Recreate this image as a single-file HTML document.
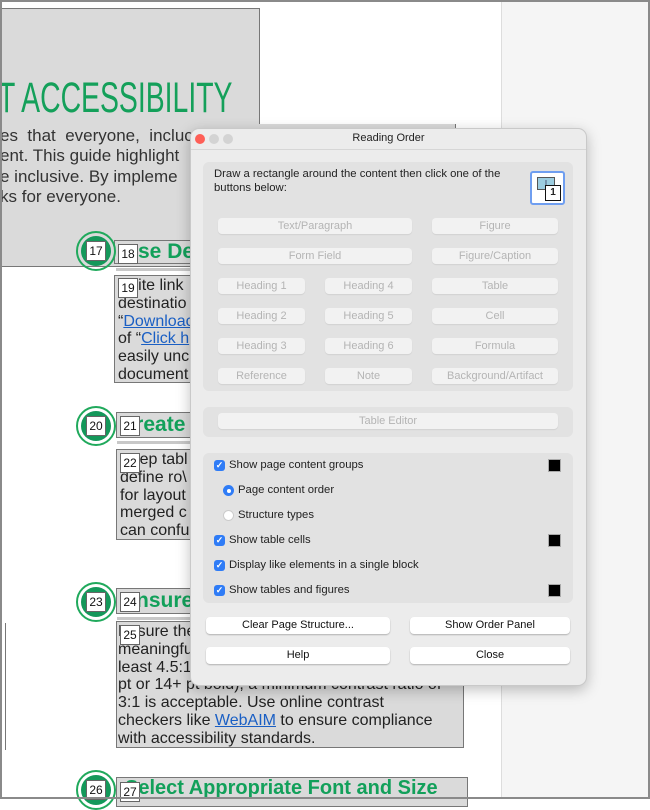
<!DOCTYPE html>
<html><head><meta charset="utf-8"><style>
*{margin:0;padding:0;box-sizing:border-box}
body{width:650px;height:799px;overflow:hidden;background:#fff;position:relative;font-family:"Liberation Sans",sans-serif}
.a{position:absolute}
.frame{left:0;top:0;width:650px;height:799px;border:2px solid #8a8a8a;z-index:50;pointer-events:none}
.gbox{position:absolute;background:#dadada;border:1px solid #777}
.num{position:absolute;width:20px;height:20px;background:#fff;border:1px solid #666;font-size:12px;text-align:center;line-height:18px;color:#111;z-index:3}
.circ{position:absolute;width:40px;height:40px;border-radius:50%;border:2px solid #20a95c;z-index:2}
.circ::after{content:"";position:absolute;left:3px;top:3px;width:30px;height:30px;border-radius:50%;background:#14985a}
.hd{position:absolute;color:#12a05a;font-weight:bold;font-size:21px;white-space:nowrap;overflow:hidden}
.bt{position:absolute;font-size:16px;line-height:17.8px;color:#222;white-space:nowrap;overflow:hidden;padding-left:3px}
.ln{position:absolute;height:3px;background:#c8c8c8}
a{color:#1a5fc4}
.dlg{left:190px;top:128px;width:397px;height:558px;background:#ececec;border-radius:9px;border:1px solid #c9c9c9;box-shadow:0 4px 14px rgba(0,0,0,.25);z-index:10;font-size:11.5px;color:#222}
.pan{position:absolute;background:#e2e2e2;border-radius:6px}
.b{position:absolute;height:16px;background:#f2f2f2;border-radius:4px;color:#b4b4b4;text-align:center;line-height:16px;font-size:11px;box-shadow:0 1px 1px rgba(0,0,0,.08)}
.wb{position:absolute;height:17px;background:#fff;border-radius:4px;text-align:center;line-height:17px;font-size:11px;color:#111;box-shadow:0 1px 1.5px rgba(0,0,0,.25)}
.cb{position:absolute;width:11px;height:11px;background:#2f7cf6;border-radius:3px;color:#fff;font-size:9px;line-height:11px;text-align:center;font-weight:bold}
.lb{position:absolute;font-size:11.3px;color:#222;white-space:nowrap}
.sq{position:absolute;width:13px;height:13px;background:#000;border:1px solid #aaa}
</style></head><body>
<div class="a frame"></div>
<div class="a" style="left:501px;top:0;width:149px;height:799px;background:#f5f5f5;border-left:1px solid #ddd"></div>

<!-- header -->
<div class="gbox" style="left:0;top:8px;width:260px;height:117px"></div>
<div class="a" style="left:-2px;top:74px;font-family:'Liberation Sans Narrow','Liberation Sans',sans-serif;font-size:43px;color:#14a05a;white-space:nowrap;transform:scaleX(.66);transform-origin:left">T ACCESSIBILITY</div>
<div class="gbox" style="left:0;top:124px;width:456px;height:143px;border-top:none"></div>
<div class="a" style="left:0;top:126px;font-size:17px;line-height:20.3px;color:#333;white-space:nowrap">
<div>es&nbsp; that&nbsp; everyone,&nbsp; incluc</div><div>ent. This guide highlight</div><div>e inclusive. By impleme</div><div>ks for everyone.</div></div>

<!-- section 1 -->
<div class="circ" style="left:76px;top:231px"></div>
<div class="num" style="left:86px;top:241px">17</div>
<div class="gbox" style="left:114px;top:240px;width:100px;height:24px"></div>
<div class="hd" style="left:138px;top:240px">se De</div>
<div class="num" style="left:118px;top:244px">18</div>
<div class="ln" style="left:116px;top:268px;width:90px"></div>
<div class="gbox" style="left:114px;top:275px;width:100px;height:108px"></div>
<div class="bt" style="left:115px;top:277px">Write link<br>destinatio<br>“<a href="#">Downloac</a><br>of “<a href="#">Click h</a><br>easily unc<br>document</div>
<div class="num" style="left:118px;top:278px">19</div>

<!-- section 2 -->
<div class="circ" style="left:76px;top:406px"></div>
<div class="num" style="left:86px;top:416px">20</div>
<div class="gbox" style="left:116px;top:412px;width:100px;height:26px"></div>
<div class="hd" style="left:120px;top:413px">Create</div>
<div class="num" style="left:120px;top:416px">21</div>
<div class="ln" style="left:117px;top:441px;width:90px"></div>
<div class="gbox" style="left:116px;top:449px;width:100px;height:91px"></div>
<div class="bt" style="left:117px;top:451px;width:95px">Keep tabl<br>define ro\<br>for layout<br>merged c<br>can confu</div>
<div class="num" style="left:120px;top:453px">22</div>

<!-- section 3 -->
<div class="a" style="left:3px;top:623px;width:3px;height:127px;border-right:1px solid #777"></div>
<div class="circ" style="left:76px;top:582px"></div>
<div class="num" style="left:86px;top:592px">23</div>
<div class="gbox" style="left:116px;top:588px;width:100px;height:26px"></div>
<div class="hd" style="left:122px;top:589px">Ensure</div>
<div class="num" style="left:120px;top:592px">24</div>
<div class="ln" style="left:117px;top:617px;width:90px"></div>
<div class="gbox" style="left:116px;top:621px;width:348px;height:127px"></div>
<div class="bt" style="left:115px;top:623px">Ensure the text and background colors have<br>meaningful contrast. Text should have at<br>least 4.5:1 contrast. For larger text (18+<br>pt or 14+ pt bold), a minimum contrast ratio of<br>3:1 is acceptable. Use online contrast<br>checkers like <a href="#">WebAIM</a> to ensure compliance<br>with accessibility standards.</div>
<div class="num" style="left:120px;top:625px">25</div>

<!-- section 4 -->
<div class="circ" style="left:76px;top:770px"></div>
<div class="num" style="left:86px;top:780px">26</div>
<div class="gbox" style="left:116px;top:777px;width:352px;height:30px"></div>
<div class="hd" style="left:125px;top:777px;font-size:20px">Select Appropriate Font and Size</div>
<div class="num" style="left:120px;top:782px">27</div>

<!-- dialog -->
<div class="a dlg">
 <div class="a" style="left:0;top:0;width:395px;height:21px;border-bottom:1px solid #d6d6d6"></div>
 <div class="a" style="left:4px;top:5px;width:10px;height:10px;border-radius:50%;background:#fe5f57"></div>
 <div class="a" style="left:18px;top:5px;width:10px;height:10px;border-radius:50%;background:#d3d3d3"></div>
 <div class="a" style="left:32px;top:5px;width:10px;height:10px;border-radius:50%;background:#d3d3d3"></div>
 <div class="a" style="left:0;top:3px;width:395px;text-align:center;font-size:11px">Reading Order</div>

 <div class="pan" style="left:12px;top:33px;width:370px;height:229px"></div>
 <div class="lb" style="left:23px;top:38px;line-height:14px">Draw a rectangle around the content then click one of the<br>buttons below:</div>
 <div class="a" style="left:339px;top:42px;width:35px;height:34px;border:2px solid #6f9ef0;border-radius:3px;background:#fff">
  <div class="a" style="left:5px;top:4px;width:18px;height:13px;background:#9ccde0;border:1px solid #555;font-size:8px;line-height:11px;text-align:center;color:#335">I</div>
  <div class="a" style="left:13px;top:12px;width:16px;height:16px;background:#fff;border:1.5px solid #111;font-size:10px;font-weight:bold;line-height:14px;text-align:center">1</div>
 </div>

 <div class="b" style="left:27px;top:89px;width:194px">Text/Paragraph</div>
 <div class="b" style="left:241px;top:89px;width:126px">Figure</div>
 <div class="b" style="left:27px;top:119px;width:194px">Form Field</div>
 <div class="b" style="left:241px;top:119px;width:126px">Figure/Caption</div>
 <div class="b" style="left:27px;top:149px;width:87px">Heading 1</div>
 <div class="b" style="left:134px;top:149px;width:87px">Heading 4</div>
 <div class="b" style="left:241px;top:149px;width:126px">Table</div>
 <div class="b" style="left:27px;top:179px;width:87px">Heading 2</div>
 <div class="b" style="left:134px;top:179px;width:87px">Heading 5</div>
 <div class="b" style="left:241px;top:179px;width:126px">Cell</div>
 <div class="b" style="left:27px;top:209px;width:87px">Heading 3</div>
 <div class="b" style="left:134px;top:209px;width:87px">Heading 6</div>
 <div class="b" style="left:241px;top:209px;width:126px">Formula</div>
 <div class="b" style="left:27px;top:239px;width:87px">Reference</div>
 <div class="b" style="left:134px;top:239px;width:87px">Note</div>
 <div class="b" style="left:241px;top:239px;width:126px">Background/Artifact</div>

 <div class="pan" style="left:12px;top:278px;width:370px;height:30px"></div>
 <div class="b" style="left:27px;top:284px;width:340px">Table Editor</div>

 <div class="pan" style="left:12px;top:324px;width:370px;height:150px"></div>
 <div class="cb" style="left:23px;top:331px">✓</div><div class="lb" style="left:38px;top:330px">Show page content groups</div><div class="sq" style="left:357px;top:330px"></div>
 <div class="a" style="left:32px;top:356px;width:11px;height:11px;border-radius:50%;background:#2f7cf6"><div class="a" style="left:3.5px;top:3.5px;width:4px;height:4px;border-radius:50%;background:#fff"></div></div><div class="lb" style="left:47px;top:355px">Page content order</div>
 <div class="a" style="left:32px;top:381px;width:11px;height:11px;border-radius:50%;background:#fff;border:1px solid #ccc"></div><div class="lb" style="left:47px;top:380px">Structure types</div>
 <div class="cb" style="left:23px;top:406px">✓</div><div class="lb" style="left:38px;top:405px">Show table cells</div><div class="sq" style="left:357px;top:405px"></div>
 <div class="cb" style="left:23px;top:431px">✓</div><div class="lb" style="left:38px;top:430px">Display like elements in a single block</div>
 <div class="cb" style="left:23px;top:456px">✓</div><div class="lb" style="left:38px;top:455px">Show tables and figures</div><div class="sq" style="left:357px;top:455px"></div>

 <div class="wb" style="left:15px;top:488px;width:184px">Clear Page Structure...</div>
 <div class="wb" style="left:219px;top:488px;width:160px">Show Order Panel</div>
 <div class="wb" style="left:15px;top:518px;width:184px">Help</div>
 <div class="wb" style="left:219px;top:518px;width:160px">Close</div>
</div>
</body></html>
